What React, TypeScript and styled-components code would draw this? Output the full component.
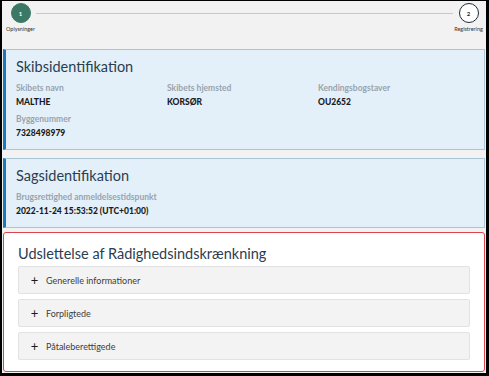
import styled, { createGlobalStyle } from "styled-components";

const GlobalStyle = createGlobalStyle`
  html, body {
    margin: 0;
    padding: 0;
    background: #000;
  }
  * {
    box-sizing: border-box;
  }
`;

const Frame = styled.div`
  width: 489px;
  height: 376px;
  border-style: solid;
  border-color: #000;
  border-width: 1px 3px 3px 2px;
  background: #f2f2f2;
  padding: 0 1px;
  font-family: Lato, "Open Sans", sans-serif;
  overflow: hidden;
`;

const Stepper = styled.div`
  display: flex;
  align-items: flex-start;
  height: 48px;
  padding: 2px 1px 0 2px;
`;

const Step = styled.div`
  display: flex;
  flex-direction: column;
  align-items: center;
  width: 31px;
`;

const Circle = styled.div<{ $active?: boolean }>`
  width: 20px;
  height: 20px;
  border-radius: 50%;
  display: flex;
  align-items: center;
  justify-content: center;
  font-size: 6px;
  font-weight: 700;
  background: ${(p) => (p.$active ? "#3b7866" : "#fff")};
  color: ${(p) => (p.$active ? "#fff" : "#1e2a33")};
  border: 1px solid ${(p) => (p.$active ? "#3b7866" : "#1e2a33")};
`;

const StepLabel = styled.div`
  margin-top: 3px;
  font-size: 5.5px;
  color: #333;
  white-space: nowrap;
`;

const StepLine = styled.div`
  flex: 1;
  height: 1px;
  background: #c8c8c8;
  margin-top: 10px;
`;

const Card = styled.section<{ $gap: number }>`
  background: #e3f0fa;
  border: 1px solid #a9c6d6;
  border-left: 3px solid #1b78bd;
  padding: 7px 10px 10px 10px;
  margin-bottom: ${(p) => p.$gap}px;
`;

const Title = styled.h2`
  margin: 0;
  font-size: 14.5px;
  line-height: 20px;
  font-weight: 400;
  color: #2b3d4f;
`;

const Grid = styled.div`
  display: grid;
  grid-template-columns: repeat(3, 151px);
  row-gap: 5px;
  margin-top: 5px;
`;

const Field = styled.div`
  display: flex;
  flex-direction: column;
`;

const Label = styled.span`
  font-size: 8.5px;
  line-height: 12px;
  font-weight: 700;
  color: #99a3ac;
`;

const Value = styled.span`
  margin-top: 2px;
  font-size: 8.5px;
  line-height: 12px;
  font-weight: 900;
  color: #1b1b1b;
`;

const Panel = styled.section`
  background: #fff;
  border: 1.5px solid #d8434c;
  border-radius: 3px;
  padding: 11px 14px 11px 14px;
`;

const Accordion = styled.div`
  display: flex;
  flex-direction: column;
  gap: 5px;
  margin-top: 2px;
`;

const AccordionItem = styled.div`
  display: flex;
  align-items: center;
  height: 28px;
  background: #f3f3f3;
  border: 1px solid #e2e2e2;
  border-radius: 2px;
  padding-left: 10px;
  gap: 6px;
`;

const Plus = styled.span`
  width: 11px;
  font-size: 13px;
  font-weight: 400;
  color: #1b1b1b;
  line-height: 1;
  text-align: center;
`;

const ItemLabel = styled.span`
  font-size: 9px;
  color: #3d3d3d;
`;

const ship = [
  { label: "Skibets navn", value: "MALTHE" },
  { label: "Skibets hjemsted", value: "KORSØR" },
  { label: "Kendingsbogstaver", value: "OU2652" },
  { label: "Byggenummer", value: "7328498979" },
];

const sections = ["Generelle informationer", "Forpligtede", "Påtaleberettigede"];

export default function App() {
  return (
    <>
      <GlobalStyle />
      <Frame>
        <Stepper>
          <Step>
            <Circle $active>1</Circle>
            <StepLabel>Oplysninger</StepLabel>
          </Step>
          <StepLine />
          <Step>
            <Circle>2</Circle>
            <StepLabel>Registrering</StepLabel>
          </Step>
        </Stepper>

        <Card $gap={8}>
          <Title>Skibsidentifikation</Title>
          <Grid>
            {ship.map((f) => (
              <Field key={f.label}>
                <Label>{f.label}</Label>
                <Value>{f.value}</Value>
              </Field>
            ))}
          </Grid>
        </Card>

        <Card $gap={4}>
          <Title>Sagsidentifikation</Title>
          <Grid>
            <Field style={{ gridColumn: "span 2" }}>
              <Label>Brugsrettighed anmeldelsestidspunkt</Label>
              <Value>2022-11-24 15:53:52 (UTC+01:00)</Value>
            </Field>
          </Grid>
        </Card>

        <Panel>
          <Title>Udslettelse af Rådighedsindskrænkning</Title>
          <Accordion>
            {sections.map((s) => (
              <AccordionItem key={s}>
                <Plus>+</Plus>
                <ItemLabel>{s}</ItemLabel>
              </AccordionItem>
            ))}
          </Accordion>
        </Panel>
      </Frame>
    </>
  );
}
